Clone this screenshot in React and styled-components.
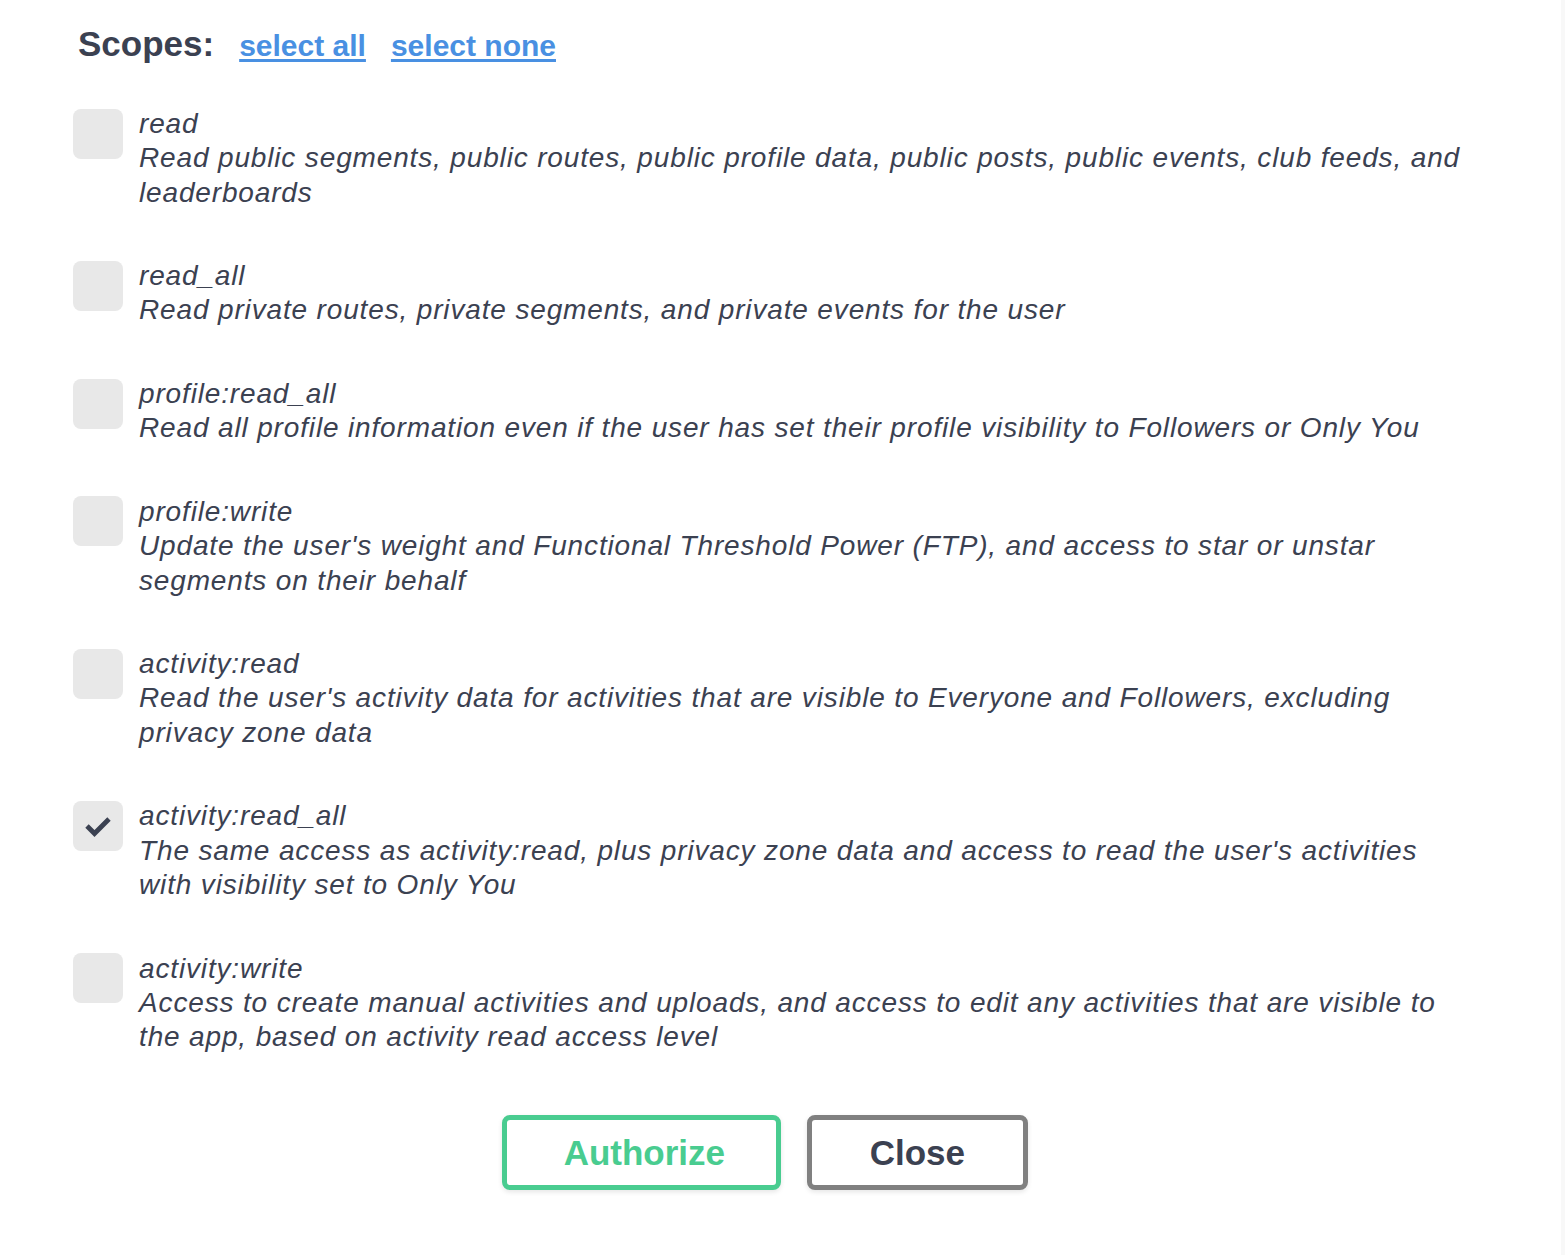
import React, { useState } from "react";
import styled, { createGlobalStyle } from "styled-components";

const GlobalStyle = createGlobalStyle`
  html, body { margin: 0; padding: 0; background: #ffffff; }
  body { font-family: "Liberation Sans", Arial, sans-serif; color: #3b4151; }
`;

const Shell = styled.div`
  display: flex;
  min-height: 1255px;
`;

const Dialog = styled.div`
  flex: 1;
  padding: 24px 0 0 73px;
  box-sizing: border-box;
`;

const Strip = styled.div`
  width: 4px;
  background: #f8f8f8;
`;

const Heading = styled.h2`
  margin: 0 0 41px 5px;
  display: flex;
  align-items: baseline;
  font-size: 35px;
  line-height: 40px;
  font-weight: 700;
  color: #3b4151;
`;

const SelectLink = styled.a`
  margin-left: 25px;
  font-size: 30px;
  font-weight: 700;
  color: #4990e2;
  text-decoration: underline;
  text-decoration-thickness: 2.5px;
  text-underline-offset: 3px;
  cursor: pointer;
`;

const ScopeList = styled.div`
  display: flex;
  flex-direction: column;
  gap: 49.3px;
  width: 1400px;
`;

const ScopeRow = styled.label`
  display: flex;
  align-items: flex-start;
  gap: 16px;
  cursor: pointer;
`;

const Box = styled.span`
  flex: none;
  width: 50px;
  height: 50px;
  margin-top: 1.5px;
  border-radius: 8px;
  background: #e8e8e8;
  display: flex;
  align-items: center;
  justify-content: center;
`;

const ScopeText = styled.div`
  flex: 1;
  font-style: italic;
  font-size: 28px;
  line-height: 34.3px;
  letter-spacing: 0.85px;
  color: #3b4151;
`;

const ScopeName = styled.div``;
const ScopeDesc = styled.div``;

const ButtonRow = styled.div`
  display: flex;
  justify-content: center;
  gap: 26px;
  margin-top: 61px;
  width: 1530px;
  margin-left: -73px;
`;

const Button = styled.button`
  box-sizing: border-box;
  height: 75px;
  padding: 0 ${(p) => p.$padR}px 0 ${(p) => p.$padL}px;
  border: 5px solid ${(p) => p.$border};
  border-radius: 8px;
  background: #ffffff;
  color: ${(p) => p.$color};
  font-family: "Liberation Sans", Arial, sans-serif;
  font-size: 35px;
  font-weight: 700;
  box-shadow: 0 2px 5px rgba(0, 0, 0, 0.1);
  cursor: pointer;
`;

const scopes = [
  ["read", "Read public segments, public routes, public profile data, public posts, public events, club feeds, and leaderboards"],
  ["read_all", "Read private routes, private segments, and private events for the user"],
  ["profile:read_all", "Read all profile information even if the user has set their profile visibility to Followers or Only You"],
  ["profile:write", "Update the user's weight and Functional Threshold Power (FTP), and access to star or unstar segments on their behalf"],
  ["activity:read", "Read the user's activity data for activities that are visible to Everyone and Followers, excluding privacy zone data"],
  ["activity:read_all", "The same access as activity:read, plus privacy zone data and access to read the user's activities with visibility set to Only You"],
  ["activity:write", "Access to create manual activities and uploads, and access to edit any activities that are visible to the app, based on activity read access level"],
];

const Check = () => (
  <svg width="50" height="50" viewBox="0 0 50 50">
    <polyline points="14,25 21.5,32.5 36,18" fill="none" stroke="#3b4151" strokeWidth="4.8" />
  </svg>
);

export default function App() {
  const [checked, setChecked] = useState({ "activity:read_all": true });
  return (
    <>
      <GlobalStyle />
      <Shell>
        <Dialog>
          <Heading>
            Scopes:
            <SelectLink onClick={() => setChecked(Object.fromEntries(scopes.map(([n]) => [n, true])))}>select all</SelectLink>
            <SelectLink onClick={() => setChecked({})}>select none</SelectLink>
          </Heading>
          <ScopeList>
            {scopes.map(([name, desc]) => (
              <ScopeRow key={name} onClick={() => setChecked((c) => ({ ...c, [name]: !c[name] }))}>
                <Box>{checked[name] && <Check />}</Box>
                <ScopeText>
                  <ScopeName>{name}</ScopeName>
                  <ScopeDesc>{desc}</ScopeDesc>
                </ScopeText>
              </ScopeRow>
            ))}
          </ScopeList>
          <ButtonRow>
            <Button $padL={56.7} $padR={50.7} $border="#49cc90" $color="#49cc90">Authorize</Button>
            <Button $padL={58} $padR={58} $border="#808080" $color="#3b4151">Close</Button>
          </ButtonRow>
        </Dialog>
        <Strip />
      </Shell>
    </>
  );
}
